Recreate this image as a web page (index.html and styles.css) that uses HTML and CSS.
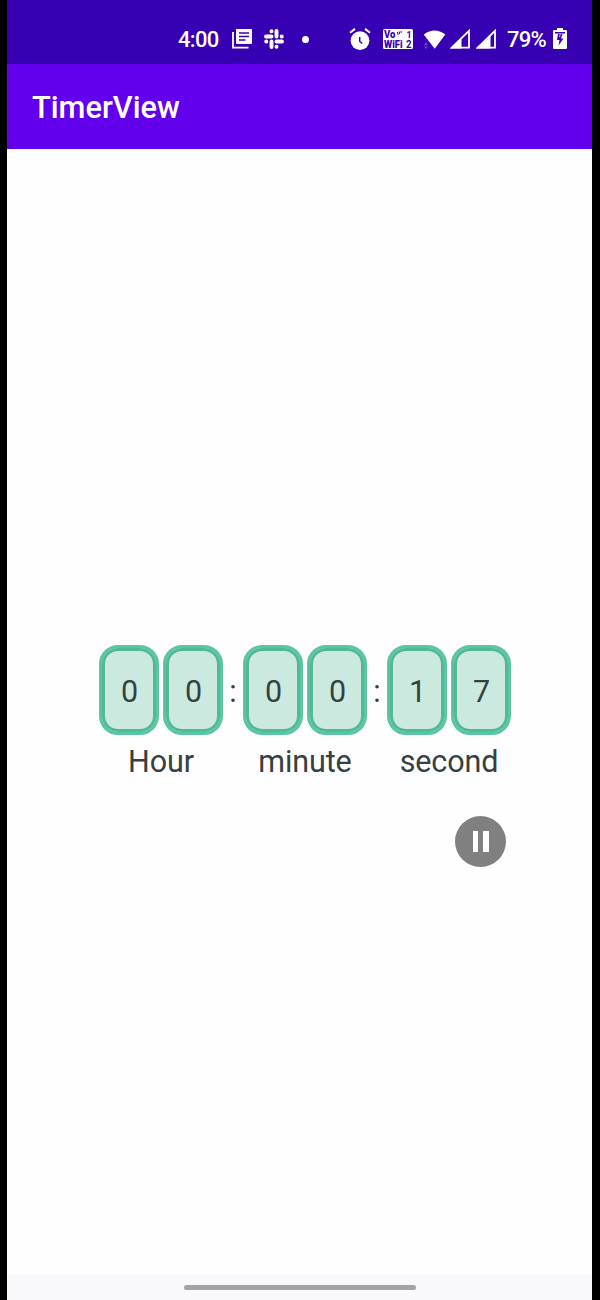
FILE: index.html
```html
<!DOCTYPE html>
<html lang="en">
<head>
<meta charset="utf-8">
<title>TimerView</title>
<link rel="stylesheet" href="styles.css">
</head>
<body>
<div class="phone">
  <header class="status">
    <span class="clock">4:00</span>
    <svg class="ic-news" width="20" height="20" viewBox="0 0 20 20"><path d="M4 0h15q1 0 1 1v13q0 1-1 1H5q-1 0-1-1z" fill="#fff"/><path d="M1 3v15.700h15.500" fill="none" stroke="#fff" stroke-width="1.800"/><path d="M7 4h10M7 7.500h10M7 11h6.500" stroke="#3700b3" stroke-width="1.500"/></svg>
    <svg class="ic-slack" width="20" height="20" viewBox="0 0 20 20"><g stroke="#fff" stroke-width="3.900" stroke-linecap="round"><path d="M7.500 7.500H2M12.500 7.500V2M12.500 12.500H18M7.500 12.500V18"/><path d="M7.500 2.200v.1M17.800 7.500h-.1M12.500 17.800v-.1M2.200 12.500h.1"/></g><path d="M7.500 2v2h-2M18 7.500h-2v-2M12.500 18v-2h2M2 12.500h2v2" fill="#fff"/></svg>
    <span class="dot"></span>
    <svg class="ic-alarm" width="22" height="22" viewBox="0 0 22 22"><circle cx="11" cy="12.600" r="9.400" fill="#fff"/><path d="M1 4.800L6 .9M21 4.800L16 .9" stroke="#fff" stroke-width="2"/><path d="M10.700 9v4.500l2.600 2" fill="none" stroke="#3700b3" stroke-width="1.500"/></svg>
    <svg class="ic-vowifi" width="30" height="20" viewBox="0 0 30 20"><rect width="30" height="20" rx="1.500" fill="#fff"/><g fill="#3700b3" font-family="Roboto, sans-serif" font-weight="900" font-size="8"><text transform="translate(1 8.700) scale(1.180 1.250)">Vo</text><text transform="translate(1 18.500) scale(1.180 1.300)">WiFi</text><text transform="translate(23.500 8.700) scale(1.100 1.200)" font-weight="700">1</text><text transform="translate(23 18.500) scale(1.200 1.250)" font-weight="700">2</text></g><path d="M14.500 3l.7 3M16.200 2.500l.4 2.500M18 2l.2 2" stroke="#3700b3" stroke-width="1"/></svg>
    <svg class="ic-wifi" width="24" height="20" viewBox="0 0 24 20"><path d="M.7 4.500Q11.500-3.500 22.300 4.500L11.700 18.800z" fill="#fff"/><path d="M1 15l2-2.500L5 15zM1 16.500h4L3 19z" fill="#7350cc"/></svg>
    <svg class="ic-signal" width="20" height="20" viewBox="0 0 20 20"><path d="M1.800 18.700L19 1.800v16.900z" fill="none" stroke="#fff" stroke-width="1.800"/><path d="M0 19.500L11.500 8.500v11z" fill="#fff"/></svg>
    <svg class="ic-signal second-sim" width="20" height="20" viewBox="0 0 20 20"><path d="M1.800 18.700L19 1.800v16.900z" fill="none" stroke="#fff" stroke-width="1.800"/><path d="M0 19.500L14.500 5.500v14z" fill="#fff"/></svg>
    <span class="battery">79%</span>
    <svg class="ic-battery" width="14" height="21" viewBox="0 0 14 21"><path d="M4 0h6v2h3q1 0 1 1v17q0 1-1 1H1q-1 0-1-1V3q0-1 1-1h3z" fill="#fff"/><path d="M2 4h10v1.500H2zM5 6l-1 6h2.500L5.500 17.500 10.500 10.500H8l1.500-4.500z" fill="#3700b3"/><path d="M7.300 6L6.500 9" stroke="#fff" stroke-width=".8"/></svg>
  </header>
  <div class="appbar">TimerView</div>
  <main class="content">
    <div class="timer">
      <div class="unit"><div class="digits"><span class="digit">0</span><span class="digit">0</span></div><span class="label">Hour</span></div>
      <span class="colon">:</span>
      <div class="unit"><div class="digits"><span class="digit">0</span><span class="digit">0</span></div><span class="label">minute</span></div>
      <span class="colon">:</span>
      <div class="unit"><div class="digits"><span class="digit">1</span><span class="digit">7</span></div><span class="label">second</span></div>
    </div>
    <button class="pause" aria-label="Pause"><span></span><span></span></button>
  </main>
  <footer class="nav"><span class="handle"></span></footer>
</div>
</body>
</html>
```
FILE: styles.css
```css
* { box-sizing: border-box; }
body { margin: 0; background: #000; font-family: Roboto, sans-serif; }
.phone { display: flex; flex-direction: column; width: 585px; height: 1300px; margin-left: 7px; background: #fefdff; }
.status { display: flex; align-items: flex-start; height: 64px; padding: 29px 0 0 170px; background: #3700b3; color: #fff; font-size: 22px; line-height: 22px; font-weight: 500; white-space: nowrap; }
.status svg { flex: none; }
.clock { width: 55px; letter-spacing: -0.7px; padding-left: 1px; }
.ic-slack { margin-left: 12px; }
.dot { width: 7px; height: 7px; margin: 7px 0 0 18px; border-radius: 50%; background: #fff; }
.ic-alarm { margin: -1px 0 0 40px; }
.ic-vowifi { margin-left: 12px; }
.ic-wifi { margin: 1px 0 0 10px; }
.ic-signal { margin-left: 3px; }
.second-sim { margin-left: 6px; }
.battery { width: 45px; padding-left: 11px; font-size: 22px; letter-spacing: -0.7px; }
.ic-battery { margin: -1px 0 0 12px; }
.appbar { height: 85px; padding-left: 25px; background: #6200ee; color: #fff; font-size: 30.8px; font-weight: 500; line-height: 87px; }
.content { flex: 1; padding: 496px 0 0 92px; color: #34413e; font-size: 30.500px; }
.timer { display: flex; }
.unit { display: flex; flex-direction: column; align-items: center; width: 124px; }
.digits { display: flex; gap: 4px; }
.digit { width: 60px; height: 90px; border: 3px solid #5bc5a2; border-radius: 19px; background: #cce9e0; box-shadow: inset 0 0 0 3px #50b998; line-height: 88px; text-indent: 1px; text-align: center; }
.label { margin-top: 9px; line-height: 36px; letter-spacing: -0.1px; }
.colon { width: 20px; text-align: center; line-height: 93px; }
.pause { display: flex; align-items: center; justify-content: center; gap: 5px; width: 51px; height: 51px; margin: 35.500px 0 0 356.300px; padding: 0; border: 0; border-radius: 50%; background: #808080; }
.pause span { width: 5.500px; height: 21px; background: #fff; }
.nav { display: flex; justify-content: center; height: 25px; padding-top: 10px; background: #f9f8fa; }
.handle { width: 232px; height: 5px; border-radius: 3px; background: #a3a2a4; }
```
